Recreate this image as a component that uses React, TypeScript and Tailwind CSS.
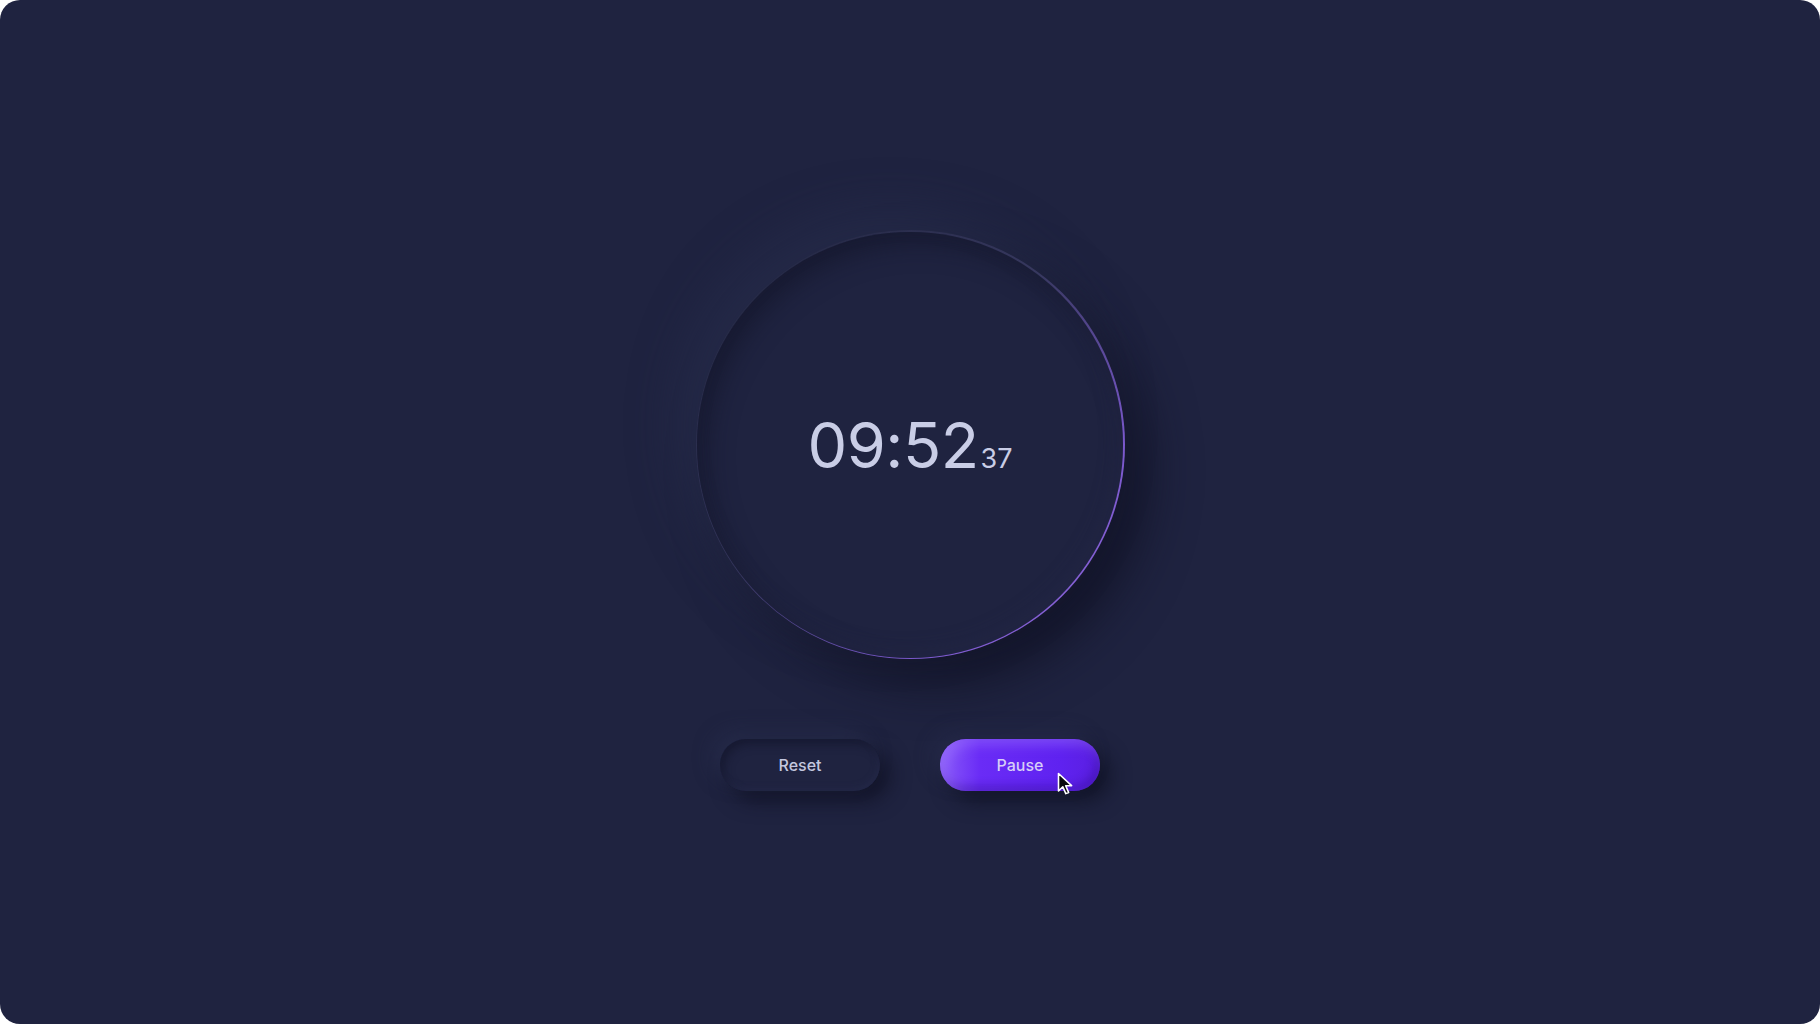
import React from "react";

function Cursor() {
  return (
    <svg
      width="18"
      height="24"
      viewBox="0 0 18 24"
      className="pointer-events-none absolute left-[117px] top-[33px]"
    >
      <path
        d="M1.5 1.5 L1.5 19 L5.8 14.8 L8.8 21.6 L11.6 20.4 L8.7 13.7 L14.6 13.7 Z"
        fill="#0b0b10"
        stroke="#ffffff"
        strokeWidth="1.6"
        strokeLinejoin="round"
      />
    </svg>
  );
}

export default function App() {
  return (
    <div className="min-h-screen bg-white">
      <div
        className="flex h-[1024px] w-full flex-col items-center justify-center overflow-hidden rounded-[20px] bg-[#1f2340] pb-[3px]"
        style={{ fontFamily: "Inter, 'Noto Sans', sans-serif" }}
      >
        {/* dial */}
        <div className="rounded-full bg-[linear-gradient(135deg,#262a47_15%,#37385f_45%,#7a58cc_75%,#8a63d8_90%)] p-[1.5px] shadow-[-20px_-20px_45px_rgba(42,47,80,0.5),24px_26px_48px_rgba(14,16,33,0.7)]">
          <div className="flex h-[426px] w-[426px] items-center justify-center rounded-full bg-[#1f2340] shadow-[inset_10px_12px_24px_rgba(16,18,36,0.5),inset_-6px_-8px_18px_rgba(42,47,80,0.3)]">
            <div className="flex items-baseline pt-[2px] text-[#c9cde6]">
              <span className="text-[63px] font-normal leading-none tracking-[-0.5px]">
                09:52
              </span>
              <span className="ml-[2px] text-[27px] font-normal leading-none">
                37
              </span>
            </div>
          </div>
        </div>

        {/* controls */}
        <div className="mt-[80px] flex gap-[60px]">
          <button className="h-[52px] w-[160px] rounded-full bg-[#1f2340] text-[16px] font-medium text-[#c3c7df] shadow-[-8px_-8px_18px_rgba(42,47,80,0.5),10px_10px_20px_rgba(14,16,33,0.7),inset_4px_5px_10px_rgba(17,19,38,0.55),inset_-2px_-3px_6px_rgba(44,49,84,0.4)]">
            Reset
          </button>
          <div className="relative">
            <button className="h-[52px] w-[160px] rounded-full bg-[linear-gradient(90deg,#8a5cf8_0%,#6a2cf6_25%,#5f22f0_75%,#5a1fe0_100%)] text-[16px] font-medium text-[#d6cdf7] shadow-[-8px_-8px_18px_rgba(42,47,80,0.45),10px_10px_20px_rgba(14,16,33,0.75),inset_6px_6px_12px_rgba(160,120,255,0.45),inset_-4px_-5px_10px_rgba(50,10,150,0.45)]">
              Pause
            </button>
            <Cursor />
          </div>
        </div>
      </div>
    </div>
  );
}
